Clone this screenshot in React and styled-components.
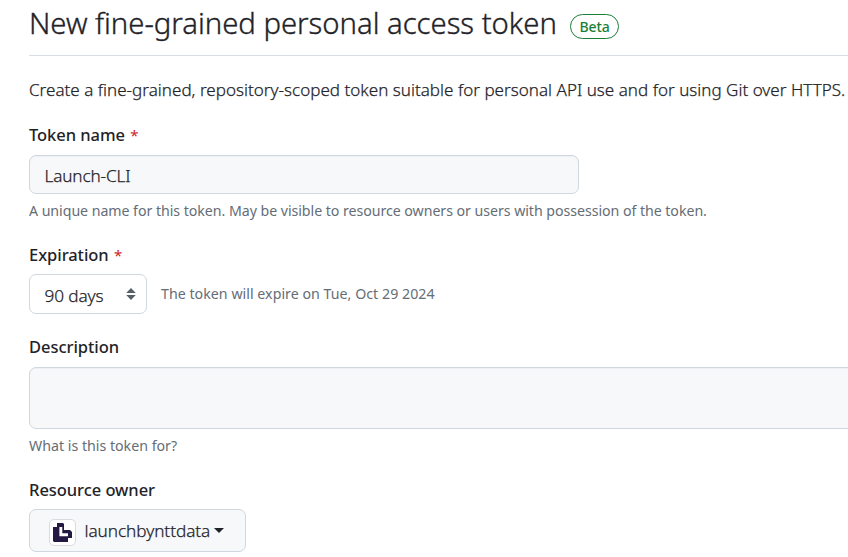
import React from "react";
import styled, { createGlobalStyle } from "styled-components";

const GlobalStyle = createGlobalStyle`
  * { box-sizing: border-box; }
  body {
    margin: 0;
    overflow: hidden;
    background: #fff;
    color: #1f2328;
    font-family: "Noto Sans", "Open Sans", sans-serif;
  }
`;

const Page = styled.main`
  width: 848px;
  height: 557px;
  padding-left: 29px;
  overflow: hidden;
`;

const Header = styled.header`
  display: flex;
  align-items: flex-start;
  gap: 15px;
  height: 56px;
  border-bottom: 1px solid #d8dee4;
`;

const Title = styled.h1`
  width: 526px;
  margin: 0;
  color: #1f2328;
  font-size: 29.3px;
  font-weight: 300;
  line-height: 46px;
  letter-spacing: -0.03px;
  white-space: nowrap;
  -webkit-text-stroke: 0.35px currentColor;
`;

const BetaLabel = styled.span`
  width: 49px;
  height: 25px;
  margin-top: 14px;
  border: 1px solid #1a7f37;
  border-radius: 13px;
  color: #1a7f37;
  font-size: 14px;
  font-weight: 500;
  line-height: 23px;
  letter-spacing: -0.1px;
  text-align: center;
`;

const Intro = styled.p`
  margin: 23px 0 0;
  font-size: 17px;
  font-weight: 300;
  line-height: 22px;
  letter-spacing: 0.025px;
  white-space: nowrap;
  -webkit-text-stroke: 0.25px currentColor;
`;

const Field = styled.section`
  margin-top: ${(p) => p.$top}px;
`;

const Label = styled.label`
  display: block;
  height: 24px;
  font-size: 16.5px;
  font-weight: 500;
  line-height: 24px;
  letter-spacing: -0.05px;
`;

const Required = styled.span`
  margin-left: 1px;
  color: #cf222e;
  font-size: 15px;
  font-weight: 400;
`;

const Box = styled.div`
  display: flex;
  align-items: center;
  border: 1px solid #d0d7de;
  border-radius: 7px;
  background: #f6f8fa;
  font-size: 17.2px;
  font-weight: 300;
  line-height: 24px;
  -webkit-text-stroke: 0.25px currentColor;
`;

const TextInput = styled(Box)`
  width: 550px;
  height: 39px;
  margin-top: 8px;
  padding: 2px 15px 0 14.5px;
  letter-spacing: -0.15px;
  box-shadow: inset 0 1px 0 rgba(208, 215, 222, 0.2);
`;

const TextArea = styled(Box)`
  width: 860px;
  height: 62px;
  margin-top: 8px;
  box-shadow: inset 0 1px 0 rgba(208, 215, 222, 0.2);
`;

const Select = styled(Box)`
  justify-content: space-between;
  width: 118px;
  height: 40px;
  padding: 0 10px 0 14.5px;
  background: #fff;
  letter-spacing: -0.1px;

  span { padding-top: 3px; }
`;

const SelectRow = styled.div`
  display: flex;
  align-items: center;
  gap: 14px;
  margin-top: 7px;
`;

const Help = styled.p`
  margin: ${(p) => p.$top || 0}px 0 ${(p) => p.$bottom || 0}px;
  color: #656d76;
  font-size: 14.2px;
  line-height: 21px;
  letter-spacing: ${(p) => p.$spacing || 0}px;
  white-space: nowrap;
`;

const OwnerButton = styled(Box)`
  width: 217px;
  height: 43px;
  margin-top: 7px;
  padding: 0 19px;
  letter-spacing: -0.06px;
`;

const Avatar = styled.span`
  display: flex;
  align-items: center;
  justify-content: center;
  width: 27px;
  height: 27px;
  margin: 3px 8.5px 0 0;
  border: 1px solid #d8dbdf;
  border-radius: 5px;
  background: #fff;
`;

const Caret = styled.span`
  margin-left: 4px;
  border: 5px solid transparent;
  border-top-color: #1f2328;
  border-bottom: 0;
`;

const SortIcon = () => (
  <svg width="10" height="14" viewBox="0 0 10 14" fill="#57606a">
    <path d="M5 1 9.8 6H.2zM5 13 .2 8h9.6z" />
  </svg>
);

const LaunchLogo = () => (
  <svg width="19" height="19" viewBox="0 0 19 19" fill="#231942">
    <path
      d="M4 0h6l1 1v6h6l2 2v6h-4v4H1l-1-1V4h4zM6.4 4v9.2H15v-2.9H9.3V4z"
      fillRule="evenodd"
    />
  </svg>
);

export default function App() {
  return (
    <Page>
      <GlobalStyle />
      <Header>
        <Title>New fine-grained personal access token</Title>
        <BetaLabel>Beta</BetaLabel>
      </Header>
      <Intro>
        Create a fine-grained, repository-scoped token suitable for personal API use and for using Git over HTTPS.
      </Intro>
      <Field $top={22}>
        <Label>Token name <Required>*</Required></Label>
        <TextInput>Launch-CLI</TextInput>
        <Help $top={6} $spacing={-0.05}>
          A unique name for this token. May be visible to resource owners or users with possession of the token.
        </Help>
      </Field>
      <Field $top={22}>
        <Label>Expiration <Required>*</Required></Label>
        <SelectRow>
          <Select><span>90 days</span><SortIcon /></Select>
          <Help $bottom={2} $spacing={0.03}>The token will expire on Tue, Oct 29 2024</Help>
        </SelectRow>
      </Field>
      <Field $top={21}>
        <Label>Description</Label>
        <TextArea />
        <Help $top={6}>What is this token for?</Help>
      </Field>
      <Field $top={22}>
        <Label>Resource owner</Label>
        <OwnerButton>
          <Avatar><LaunchLogo /></Avatar>
          launchbynttdata
          <Caret />
        </OwnerButton>
      </Field>
    </Page>
  );
}
